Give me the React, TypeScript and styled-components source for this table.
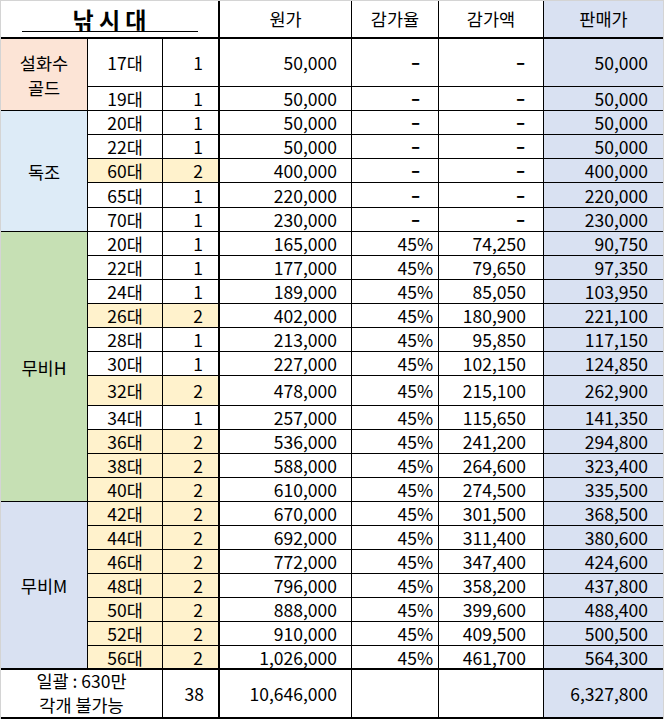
import React from 'react';
import styled, { createGlobalStyle } from 'styled-components';

// --- DATA ---

const colors = {
  line: '#000000',
  grid: '#d4d4d4',
  peach: '#fce4d6',
  sky: '#ddebf7',
  green: '#c6e0b4',
  lavender: '#d9e1f2',
  yellow: '#fff2cc',
};

type Row = {
  len: string;
  qty: number;
  cost: string;
  rate?: string;
  cut?: string;
  price: string;
  h?: number;
};

type Group = { name: string[]; bg: string; rows: Row[] };

const dc = (len: string, qty: number, cost: string, h = 24): Row => ({
  len,
  qty,
  cost,
  price: cost,
  h,
});

const sale = (len: string, qty: number, cost: string, cut: string, price: string, h = 24): Row => ({
  len,
  qty,
  cost,
  rate: '45%',
  cut,
  price,
  h,
});

const groups: Group[] = [
  {
    name: ['설화수', '골드'],
    bg: colors.peach,
    rows: [dc('17대', 1, '50,000', 48), dc('19대', 1, '50,000')],
  },
  {
    name: ['독조'],
    bg: colors.sky,
    rows: [
      dc('20대', 1, '50,000'),
      dc('22대', 1, '50,000'),
      dc('60대', 2, '400,000'),
      dc('65대', 1, '220,000', 25),
      dc('70대', 1, '230,000'),
    ],
  },
  {
    name: ['무비H'],
    bg: colors.green,
    rows: [
      sale('20대', 1, '165,000', '74,250', '90,750'),
      sale('22대', 1, '177,000', '79,650', '97,350'),
      sale('24대', 1, '189,000', '85,050', '103,950'),
      sale('26대', 2, '402,000', '180,900', '221,100'),
      sale('28대', 1, '213,000', '95,850', '117,150'),
      sale('30대', 1, '227,000', '102,150', '124,850'),
      sale('32대', 2, '478,000', '215,100', '262,900', 30),
      sale('34대', 1, '257,000', '115,650', '141,350'),
      sale('36대', 2, '536,000', '241,200', '294,800'),
      sale('38대', 2, '588,000', '264,600', '323,400'),
      sale('40대', 2, '610,000', '274,500', '335,500'),
    ],
  },
  {
    name: ['무비M'],
    bg: colors.lavender,
    rows: [
      sale('42대', 2, '670,000', '301,500', '368,500'),
      sale('44대', 2, '692,000', '311,400', '380,600'),
      sale('46대', 2, '772,000', '347,400', '424,600'),
      sale('48대', 2, '796,000', '358,200', '437,800'),
      sale('50대', 2, '888,000', '399,600', '488,400'),
      sale('52대', 2, '910,000', '409,500', '500,500'),
      sale('56대', 2, '1,026,000', '461,700', '564,300'),
    ],
  },
];

// --- STYLES ---

const GlobalStyle = createGlobalStyle`
  body {
    margin: 0;
    background: #fff;
    color: #000;
    font-family: 'Noto Sans CJK KR', 'Liberation Sans', sans-serif;
  }
`;

const Sheet = styled.div<{ $rows: string }>`
  display: grid;
  grid-template-columns: 87px 75px 57px 132px 87px 105px 119px;
  grid-template-rows: ${(p) => p.$rows};
  width: 664px;
  box-sizing: border-box;
  border: 1px solid ${colors.grid};
  border-bottom: none;
  font-size: 17.5px;
  line-height: 1;
`;

const Cell = styled.div<{ $bg?: string; $right?: number; $bottom?: number }>`
  display: flex;
  align-items: center;
  box-sizing: border-box;
  padding-top: 1px;
  white-space: nowrap;
  background: ${(p) => p.$bg ?? '#fff'};
  border-right: ${(p) => p.$right ?? 1}px solid ${colors.line};
  border-bottom: ${(p) => p.$bottom ?? 1}px solid ${colors.line};
`;

const HeadCell = styled(Cell)`
  justify-content: center;
  padding-top: 0;
`;

const TitleCell = styled(HeadCell)`
  grid-column: span 3;
`;

const Title = styled.span`
  display: inline-block;
  width: 176px;
  line-height: 24px;
  text-align: center;
  font-size: 23px;
  font-weight: 700;
  border-bottom: 1px solid ${colors.line};
`;

const CategoryCell = styled(Cell)<{ $span: number }>`
  grid-row: span ${(p) => p.$span};
  flex-direction: column;
  justify-content: center;
  line-height: 25px;
`;

const CenterCell = styled(Cell)`
  justify-content: center;
`;

const NumCell = styled(Cell)<{ $pad: number }>`
  justify-content: flex-end;
  padding-right: ${(p) => p.$pad}px;
`;

// accounting-style zero dash, a little wider than a plain hyphen
const Dash = styled.span`
  display: inline-block;
  font-weight: 700;
  transform: translateY(-1px) scaleX(1.5);
  transform-origin: right center;
`;

const FooterNote = styled(Cell)`
  grid-column: span 2;
  flex-direction: column;
  justify-content: center;
  padding-top: 0;
  padding-bottom: 2px;
  line-height: 24px;
`;

// --- COMPONENT ---

const App: React.FC = () => {
  const heights = groups.flatMap((g) => g.rows.map((r) => r.h ?? 24));
  const rowsTemplate = ['38px', ...heights.map((h) => `${h}px`), '49px'].join(' ');
  const lastGroup = groups.length - 1;

  return (
    <>
      <GlobalStyle />
      <Sheet $rows={rowsTemplate}>
        <TitleCell $right={2} $bottom={2}>
          <Title>낚 시 대</Title>
        </TitleCell>
        <HeadCell $bottom={2}>원가</HeadCell>
        <HeadCell $bottom={2}>감가율</HeadCell>
        <HeadCell $bottom={2}>감가액</HeadCell>
        <HeadCell $bottom={2} $right={0} $bg={colors.lavender}>
          판매가
        </HeadCell>

        {groups.map((g, gi) =>
          g.rows.map((r, ri) => {
            const bottom = gi === lastGroup && ri === g.rows.length - 1 ? 2 : 1;
            const mark = r.qty > 1 ? colors.yellow : undefined;
            return (
              <React.Fragment key={`${gi}-${ri}`}>
                {ri === 0 && (
                  <CategoryCell $span={g.rows.length} $bg={g.bg} $bottom={gi === lastGroup ? 2 : 1}>
                    {g.name.map((n) => (
                      <span key={n}>{n}</span>
                    ))}
                  </CategoryCell>
                )}
                <CenterCell $bg={mark} $bottom={bottom}>
                  {r.len}
                </CenterCell>
                <NumCell $pad={15} $bg={mark} $right={2} $bottom={bottom}>
                  {r.qty}
                </NumCell>
                <NumCell $pad={14} $bottom={bottom}>
                  {r.cost}
                </NumCell>
                <NumCell $pad={r.rate ? 5 : 18} $bottom={bottom}>
                  {r.rate ?? <Dash>-</Dash>}
                </NumCell>
                <NumCell $pad={r.cut ? 17 : 18} $bottom={bottom}>
                  {r.cut ?? <Dash>-</Dash>}
                </NumCell>
                <NumCell $pad={15} $right={0} $bottom={bottom} $bg={colors.lavender}>
                  {r.price}
                </NumCell>
              </React.Fragment>
            );
          })
        )}

        <FooterNote $bottom={2}>
          <span>일괄 : 630만</span>
          <span>각개 불가능</span>
        </FooterNote>
        <NumCell $pad={14} $right={2} $bottom={2}>
          38
        </NumCell>
        <NumCell $pad={14} $bottom={2}>
          10,646,000
        </NumCell>
        <Cell $bottom={2} />
        <Cell $bottom={2} />
        <NumCell $pad={15} $right={0} $bottom={2} $bg={colors.lavender}>
          6,327,800
        </NumCell>
      </Sheet>
    </>
  );
};

export default App;
